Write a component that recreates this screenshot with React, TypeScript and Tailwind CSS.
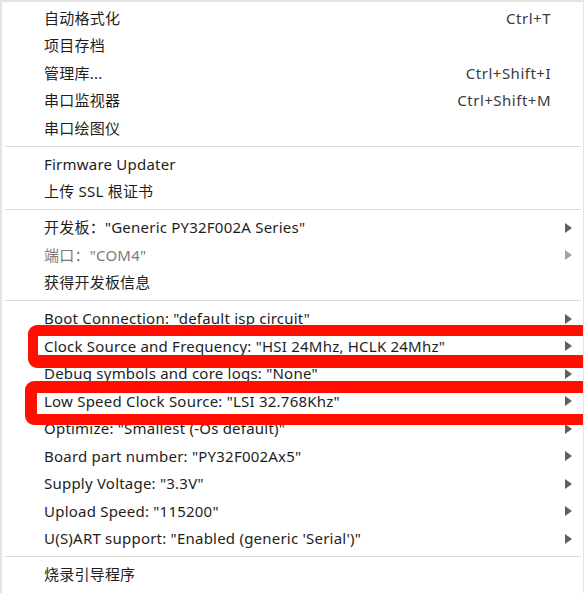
import React from "react";

type Item =
  | { kind: "sep" }
  | { kind: "row"; label: string; shortcut?: string; sub?: boolean; disabled?: boolean };

const items: Item[] = [
  { kind: "row", label: "自动格式化", shortcut: "Ctrl+T" },
  { kind: "row", label: "项目存档" },
  { kind: "row", label: "管理库...", shortcut: "Ctrl+Shift+I" },
  { kind: "row", label: "串口监视器", shortcut: "Ctrl+Shift+M" },
  { kind: "row", label: "串口绘图仪" },
  { kind: "sep" },
  { kind: "row", label: "Firmware Updater" },
  { kind: "row", label: "上传 SSL 根证书" },
  { kind: "sep" },
  { kind: "row", label: "开发板：\"Generic PY32F002A Series\"", sub: true },
  { kind: "row", label: "端口：\"COM4\"", sub: true, disabled: true },
  { kind: "row", label: "获得开发板信息" },
  { kind: "sep" },
  { kind: "row", label: "Boot Connection: \"default isp circuit\"", sub: true },
  { kind: "row", label: "Clock Source and Frequency: \"HSI 24Mhz, HCLK 24Mhz\"", sub: true },
  { kind: "row", label: "Debug symbols and core logs: \"None\"", sub: true },
  { kind: "row", label: "Low Speed Clock Source: \"LSI 32.768Khz\"", sub: true },
  { kind: "row", label: "Optimize: \"Smallest (-Os default)\"", sub: true },
  { kind: "row", label: "Board part number: \"PY32F002Ax5\"", sub: true },
  { kind: "row", label: "Supply Voltage: \"3.3V\"", sub: true },
  { kind: "row", label: "Upload Speed: \"115200\"", sub: true },
  { kind: "row", label: "U(S)ART support: \"Enabled (generic 'Serial')\"", sub: true },
  { kind: "sep" },
  { kind: "row", label: "烧录引导程序" },
];

function Arrow({ disabled }: { disabled?: boolean }) {
  return (
    <svg width="8" height="10" viewBox="0 0 8 10" className="block">
      <polygon points="0,0 7,5 0,10" fill={disabled ? "#a3a3a3" : "#606060"} />
    </svg>
  );
}

export default function App() {
  return (
    <div
      className="relative w-[584px] h-[593px] bg-white overflow-hidden border-t-2 border-l-2 border-r border-[#e4e4e4] text-[15px] text-[#1e1e1e]"
      style={{ fontFamily: '"Noto Sans", "Noto Sans CJK SC", sans-serif' }}
    >
      <div className="pt-[2.25px] flex flex-col">
        {items.map((it, i) =>
          it.kind === "sep" ? (
            <div key={i} className="py-[3.75px] ml-[3px] mr-[2px]">
              <div className="h-px bg-[#dcdcdc]" />
            </div>
          ) : (
            <div
              key={i}
              className={`h-[27.5px] flex items-center pl-[42px] pr-[10px] whitespace-nowrap ${
                it.disabled ? "text-[#7a7a7a]" : ""
              }`}
            >
              <span className="flex-1 leading-none tracking-[0.22px]">{it.label}</span>
              {it.shortcut && (
                <span className="mr-[22px] text-[#3a3a3a] leading-none tracking-[0.5px]">{it.shortcut}</span>
              )}
              {it.sub && <Arrow disabled={it.disabled} />}
            </div>
          )
        )}
      </div>

      <div className="absolute top-[323px] left-[26px] w-[600px] h-[43px] border-t-[11px] border-b-[13px] border-l-[10px] border-r-[10px] border-[#fe0f00] rounded-[9px]" />
      <div className="absolute top-[379px] left-[23px] w-[600px] h-[44px] border-t-[12px] border-b-[11px] border-l-[12px] border-r-[12px] border-[#fe0f00] rounded-[9px]" />
    </div>
  );
}
